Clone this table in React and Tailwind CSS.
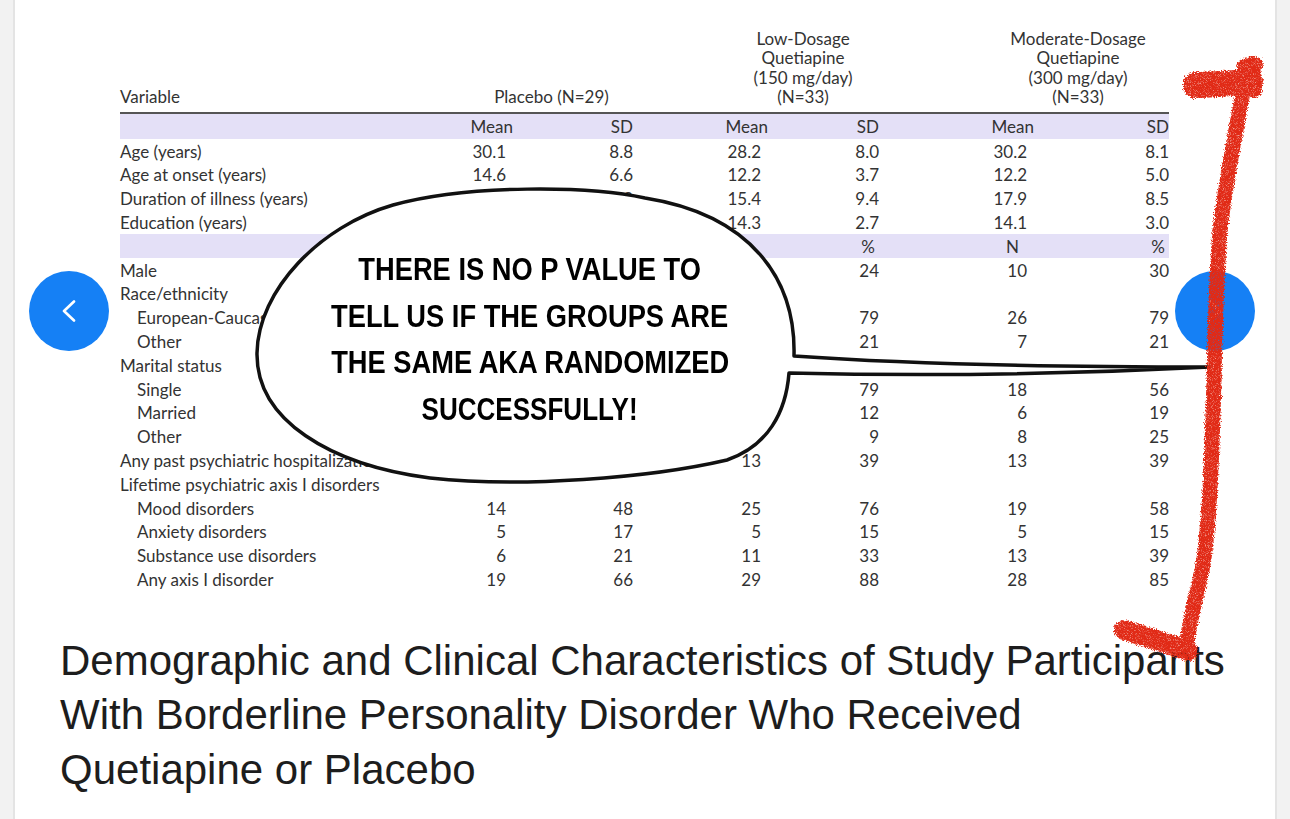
import React from "react";

const GRID = "grid grid-cols-[300px_93px_120px_135px_111px_155px_135px]";

const rows = [
  { label: "Age (years)", v: ["30.1", "8.8", "28.2", "8.0", "30.2", "8.1"] },
  { label: "Age at onset (years)", v: ["14.6", "6.6", "12.2", "3.7", "12.2", "5.0"] },
  { label: "Duration of illness (years)", v: ["", "9.9", "15.4", "9.4", "17.9", "8.5"] },
  { label: "Education (years)", v: ["", "", "14.3", "2.7", "14.1", "3.0"] },
  { band: true, label: "", v: ["", "", "", "%", "N", "%"] },
  { label: "Male", v: ["", "", "", "24", "10", "30"] },
  { label: "Race/ethnicity", v: [] },
  { label: "European-Caucasian", indent: true, v: ["", "", "", "79", "26", "79"] },
  { label: "Other", indent: true, v: ["", "", "", "21", "7", "21"] },
  { label: "Marital status", v: [] },
  { label: "Single", indent: true, v: ["", "", "", "79", "18", "56"] },
  { label: "Married", indent: true, v: ["", "", "", "12", "6", "19"] },
  { label: "Other", indent: true, v: ["", "", "3", "9", "8", "25"] },
  { label: "Any past psychiatric hospitalization", v: ["", "", "13", "39", "13", "39"] },
  { label: "Lifetime psychiatric axis I disorders", v: [] },
  { label: "Mood disorders", indent: true, v: ["14", "48", "25", "76", "19", "58"] },
  { label: "Anxiety disorders", indent: true, v: ["5", "17", "5", "15", "5", "15"] },
  { label: "Substance use disorders", indent: true, v: ["6", "21", "11", "33", "13", "39"] },
  { label: "Any axis I disorder", indent: true, v: ["19", "66", "29", "88", "28", "85"] },
];

function DataRow({ row }) {
  if (row.band) {
    return (
      <div className={`${GRID} h-[23.8px] items-center bg-[#e4e0f7]`}>
        <div />
        {row.v.map((x, i) => (
          <div key={i} className={i % 2 === 0 ? "text-right pr-[15px]" : "text-right pr-[4px]"}>
            {x}
          </div>
        ))}
      </div>
    );
  }
  return (
    <div className={`${GRID} h-[23.8px] items-center`}>
      <div className={`whitespace-nowrap ${row.indent ? "pl-[17px]" : ""}`}>{row.label}</div>
      {row.v.map((x, i) => (
        <div key={i} className={i % 2 === 0 ? "text-right pr-[7px]" : "text-right"}>
          {x}
        </div>
      ))}
    </div>
  );
}

export default function App() {
  return (
    <div className="relative w-[1290px] h-[819px] overflow-hidden bg-[#f2f2f2] px-[13px] font-['Lato',_'Noto_Sans',_sans-serif]">
      <div className="h-full bg-white border-x-2 border-[#e4e4e4] flex flex-col">
        {/* Table */}
        <div className="pl-[105px] pt-[29px] text-[17px] text-[#333]">
          <div className="w-[1049px]">
            <div className={`${GRID} items-end leading-[19.4px] pb-[5px] border-b-2 border-[#555]`}>
              <div>Variable</div>
              <div className="col-span-2 text-center pl-[50px] whitespace-nowrap">Placebo (N=29)</div>
              <div className="col-span-2 text-center pl-[94px] whitespace-nowrap">
                <div>Low-Dosage</div>
                <div>Quetiapine</div>
                <div>(150 mg/day)</div>
                <div>(N=33)</div>
              </div>
              <div className="col-span-2 text-center pl-[108px] whitespace-nowrap">
                <div>Moderate-Dosage</div>
                <div>Quetiapine</div>
                <div>(300 mg/day)</div>
                <div>(N=33)</div>
              </div>
            </div>
            <div className={`${GRID} h-[25px] items-center bg-[#e4e0f7]`}>
              <div />
              <div className="text-right">Mean</div>
              <div className="text-right">SD</div>
              <div className="text-right">Mean</div>
              <div className="text-right">SD</div>
              <div className="text-right">Mean</div>
              <div className="text-right">SD</div>
            </div>
            {rows.map((r, i) => (
              <DataRow key={i} row={r} />
            ))}
          </div>
        </div>

        {/* Caption */}
        <div className="pl-[45px] mt-[43px] font-['Liberation_Sans',_Arial,_sans-serif] text-[42px] leading-[54.5px] text-[#1d1d1d] whitespace-nowrap">
          Demographic and Clinical Characteristics of Study Participants
          <br />
          With Borderline Personality Disorder Who Received
          <br />
          Quetiapine or Placebo
        </div>
      </div>

      {/* Speech bubble */}
      <svg className="absolute left-0 top-0 pointer-events-none" width="1290" height="819">
        <path
          d="M794 356 C796 280 752 215 645 198 C590 186 470 184 393 205 C320 226 258 290 257 353 C256 420 330 465 430 478 C520 488 650 478 727 460 C768 446 786 412 789 373 Q1000 378 1210 367 Q950 367 794 356 Z"
          fill="white"
          stroke="#111"
          strokeWidth="3.5"
          strokeLinejoin="round"
        />
      </svg>
      <div className="absolute left-[260px] top-[247px] w-[540px] flex flex-col items-center font-['Liberation_Sans',_Arial,_sans-serif] font-bold text-[31px] leading-[46.5px] text-black">
        <div className="scale-x-[0.88] whitespace-nowrap">THERE IS NO P VALUE TO</div>
        <div className="scale-x-[0.88] whitespace-nowrap">TELL US IF THE GROUPS ARE</div>
        <div className="scale-x-[0.88] whitespace-nowrap">THE SAME AKA RANDOMIZED</div>
        <div className="scale-x-[0.84] whitespace-nowrap">SUCCESSFULLY!</div>
      </div>

      {/* Nav buttons */}
      <div className="absolute left-[29px] top-[271px] w-[80px] h-[80px] rounded-full bg-[#1580f5] flex items-center justify-center">
        <svg width="14" height="22" viewBox="0 0 14 22">
          <polyline points="12,1.5 2,11 12,20.5" fill="none" stroke="white" strokeWidth="2.6" strokeLinecap="round" strokeLinejoin="round" />
        </svg>
      </div>
      <div className="absolute left-[1175px] top-[271px] w-[80px] h-[80px] rounded-full bg-[#1580f5] flex items-center justify-center">
        <svg width="14" height="22" viewBox="0 0 14 22">
          <polyline points="2,1.5 12,11 2,20.5" fill="none" stroke="white" strokeWidth="2.6" strokeLinecap="round" strokeLinejoin="round" />
        </svg>
      </div>

      {/* Red crayon mark */}
      <svg className="absolute left-0 top-0 pointer-events-none" width="1290" height="819">
        <defs>
          <filter id="crayon" x="-30%" y="-5%" width="160%" height="110%">
            <feTurbulence type="fractalNoise" baseFrequency="0.9" numOctaves="2" seed="4" result="n" />
            <feDisplacementMap in="SourceGraphic" in2="n" scale="6" xChannelSelector="R" yChannelSelector="G" result="d" />
            <feTurbulence type="fractalNoise" baseFrequency="1.4" numOctaves="1" seed="11" result="grain" />
            <feColorMatrix in="grain" type="matrix" values="0 0 0 0 0  0 0 0 0 0  0 0 0 0 0  0 0 0 -2 2.05" result="mask" />
            <feComposite in="d" in2="mask" operator="in" />
          </filter>
        </defs>
        <g filter="url(#crayon)" stroke="#e12a14" fill="none" strokeLinecap="round" strokeLinejoin="round">
          <path d="M1196 85 C1215 84 1232 84 1250 81" strokeWidth="26" />
          <path d="M1244 66 L1256 64" strokeWidth="14" />
          <path d="M1252 64 L1254 90" strokeWidth="16" />
          <path d="M1243 92 C1236 130 1226 180 1220 230 C1216 280 1215 330 1214 380 C1212 450 1210 520 1203 565 C1196 600 1188 625 1186 650" strokeWidth="15" />
          <path d="M1124 630 C1150 638 1170 644 1188 651" strokeWidth="20" />
        </g>
      </svg>
    </div>
  );
}
